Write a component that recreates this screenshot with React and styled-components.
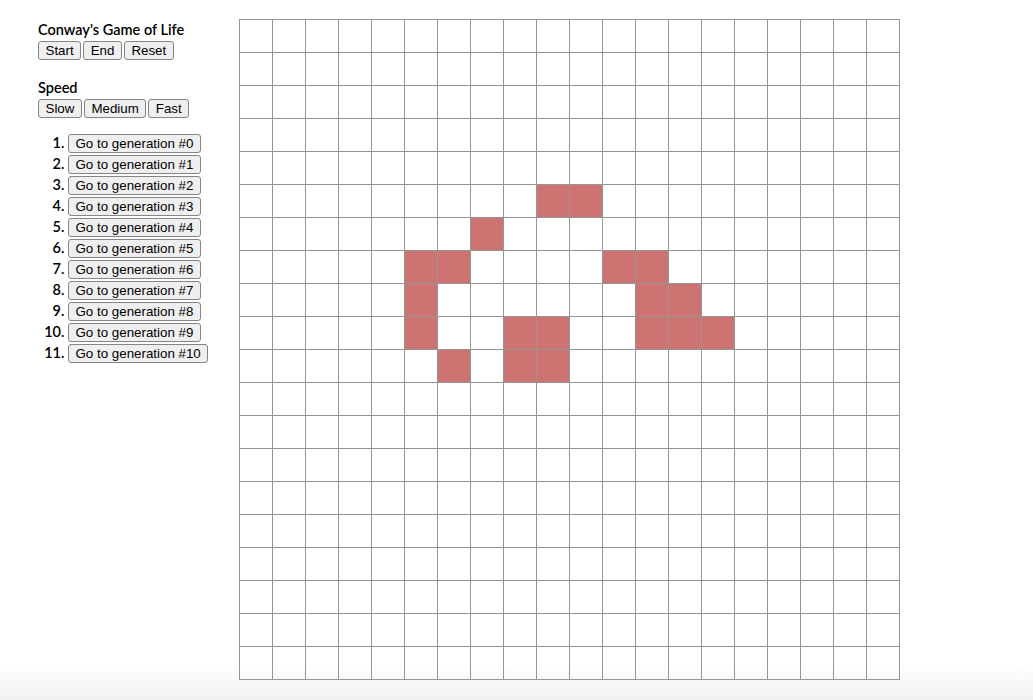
import React from 'react';
import styled, { createGlobalStyle } from 'styled-components';

const SIZE = 20;

// live cells as [row, col]
const alive = [
  [5, 9], [5, 10],
  [6, 7],
  [7, 5], [7, 6], [7, 11], [7, 12],
  [8, 5], [8, 12], [8, 13],
  [9, 5], [9, 8], [9, 9], [9, 12], [9, 13], [9, 14],
  [10, 6], [10, 8], [10, 9],
];

const aliveSet = new Set(alive.map(([r, c]) => `${r}-${c}`));

const GlobalStyle = createGlobalStyle`
  html {
    min-height: 100%;
    background: linear-gradient(to bottom, #fff 0, #fff 664px, #f1f1f1 700px);
  }
  body {
    margin: 0;
    font-family: Lato, "Noto Sans", sans-serif;
    color: #000;
  }
`;

const Page = styled.div`
  display: flex;
  align-items: flex-start;
  padding: 19px 0 0 38px;
`;

const Sidebar = styled.div`
  width: 201px;
  flex-shrink: 0;
`;

const Heading = styled.div`
  font-family: Lato, "Noto Sans", sans-serif;
  font-weight: 600;
  font-size: 14.5px;
  line-height: 21px;
  margin-bottom: 1px;
`;

const ButtonRow = styled.div`
  display: flex;
  gap: 2px;
`;

const Section = styled.div`
  margin-top: ${props => props.space || 0}px;
`;

const Button = styled.button`
  font-family: "Liberation Sans", Arial, sans-serif;
  font-size: 13.33px;
  line-height: 15px;
  padding: 1px 6.5px;
  color: #000;
  background: #efefef;
  border: 1px solid #858585;
  border-radius: 3px;
  cursor: pointer;
  vertical-align: baseline;
`;

const List = styled.ol`
  margin: 14px 0 0;
  padding-left: 30px;
`;

const Item = styled.li`
  font-family: Lato, "Noto Sans", sans-serif;
  font-weight: 600;
  font-size: 14.5px;
  line-height: 21px;
  height: 21px;

  &::marker {
    font-weight: 600;
  }
`;

const Board = styled.div`
  display: grid;
  grid-template-columns: repeat(${SIZE}, 33px);
  grid-auto-rows: 33px;
  border-top: 1px solid #959595;
  border-left: 1px solid #959595;
`;

const Cell = styled.div`
  border-right: 1px solid #959595;
  border-bottom: 1px solid #959595;
  background: ${props => props.live ? '#cd7473' : 'transparent'};
`;

const App = () => {
  const cells = [];
  for (let r = 0; r < SIZE; r++) {
    for (let c = 0; c < SIZE; c++) {
      cells.push(<Cell key={`${r}-${c}`} live={aliveSet.has(`${r}-${c}`) ? 1 : 0} />);
    }
  }

  return (
    <>
      <GlobalStyle />
      <Page>
        <Sidebar>
          <Heading>Conway's Game of Life</Heading>
          <ButtonRow>
            <Button>Start</Button>
            <Button>End</Button>
            <Button>Reset</Button>
          </ButtonRow>

          <Section space={17}>
            <Heading>Speed</Heading>
            <ButtonRow>
              <Button>Slow</Button>
              <Button>Medium</Button>
              <Button>Fast</Button>
            </ButtonRow>
          </Section>

          <List>
            {Array.from({ length: 11 }, (_, i) => (
              <Item key={i}>
                <Button>Go to generation #{i}</Button>
              </Item>
            ))}
          </List>
        </Sidebar>
        <Board>{cells}</Board>
      </Page>
    </>
  );
};

export default App;
